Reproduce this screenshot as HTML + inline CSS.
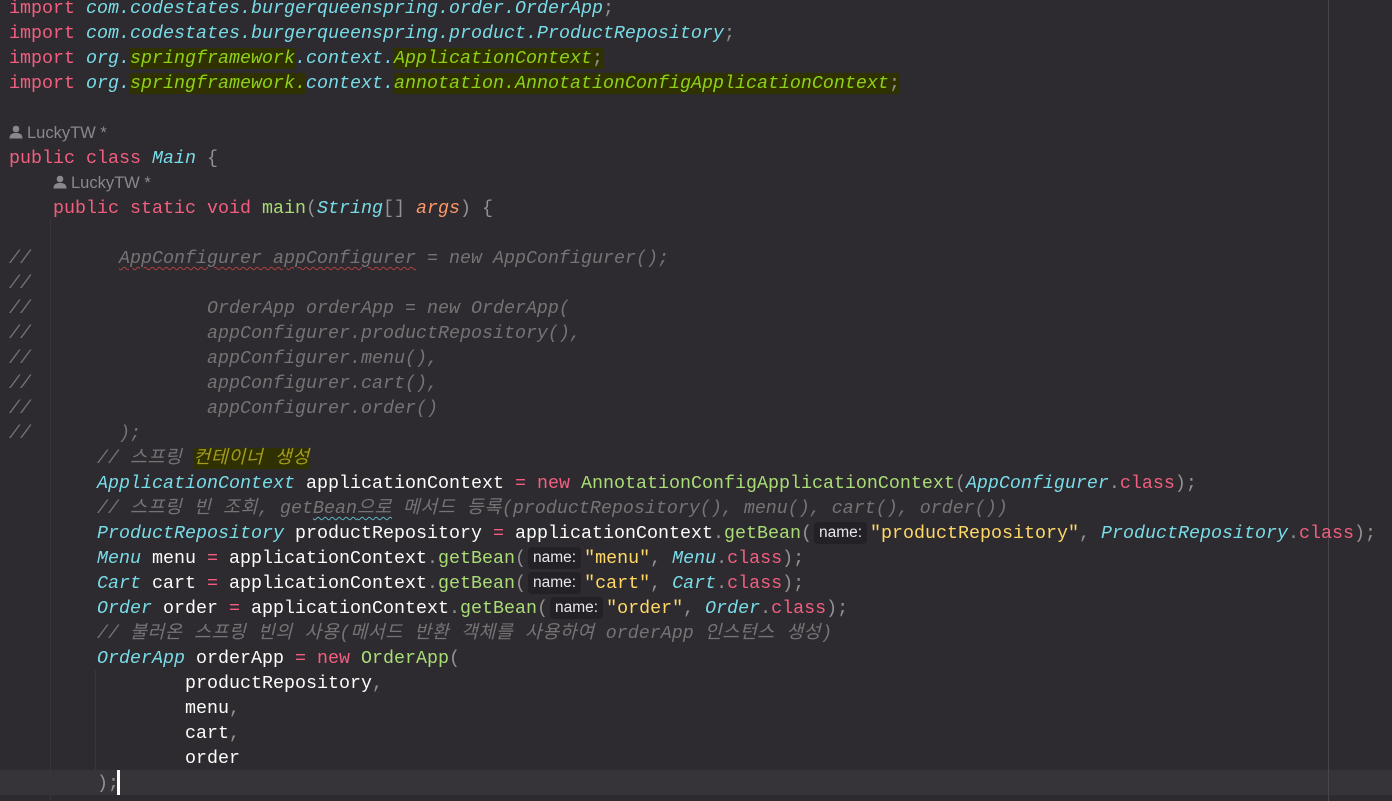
<!DOCTYPE html>
<html><head><meta charset="utf-8"><style>
html,body{margin:0;padding:0;}
body{width:1392px;height:801px;background:#2d2b2f;overflow:hidden;position:relative;
font-family:"Liberation Mono","Noto Sans CJK KR",monospace;font-size:18.33px;color:#fcfcfa;}
.l{position:absolute;left:9px;height:25px;line-height:25px;white-space:pre;}
.k{color:#f25e7f}
.p{color:#78dce8;font-style:italic}
.t{color:#78dce8;font-style:italic}
.g{color:#8ed11a;font-style:italic}
.hl{background:#2f3200}
.f{color:#a9dc76}
.s{color:#ffd866}
.c{color:#757376;font-style:italic}
.o{color:#fc9867;font-style:italic}
.d{color:#939293}
.e{color:#f25e7f}
.kr{letter-spacing:0.6px}
.a{font-family:"Liberation Sans","Noto Sans CJK KR",sans-serif;font-size:16.5px;color:#8a888c;}
.a svg{vertical-align:-1px;margin-right:4px}
.h{display:inline-block;font-family:"Liberation Sans",sans-serif;font-size:15.5px;color:#e8e6ea;background:#232125;border-radius:4px;height:22px;line-height:22px;padding:0 5px;margin:0 3px 0 2px;vertical-align:1px;}
.w{text-decoration:underline wavy #b04040;text-decoration-thickness:1px;text-underline-offset:3px}
.wb{text-decoration:underline wavy #5fb6c8;text-decoration-thickness:1px;text-underline-offset:3px}
.cur{position:absolute;left:0;top:770px;width:1392px;height:25px;background:#363438;}
.vl{position:absolute;top:0;left:1328px;width:1px;height:801px;background:#48464a;}
.ig{position:absolute;width:1px;background:#38363a;}
</style></head><body>
<div class="cur"></div>
<div class="vl"></div>
<div class="ig" style="left:50px;top:220px;height:581px"></div>
<div class="ig" style="left:95px;top:670px;height:100px"></div>

<div class="l" style="top:-4px"><span class="k">import</span> <span class="p">com.codestates.burgerqueenspring.order.OrderApp</span><span class="d">;</span></div>
<div class="l" style="top:21px"><span class="k">import</span> <span class="p">com.codestates.burgerqueenspring.product.ProductRepository</span><span class="d">;</span></div>
<div class="l" style="top:46px"><span class="k">import</span> <span class="p">org.</span><span class="g hl">springframework</span><span class="p">.context.</span><span class="g hl">ApplicationContext</span><span class="d hl">;</span></div>
<div class="l" style="top:71px"><span class="k">import</span> <span class="p">org.</span><span class="g hl">springframework.</span><span class="p">context.</span><span class="g hl">annotation.AnnotationConfigApplicationContext</span><span class="d hl">;</span></div>

<div class="l a" style="top:121px"><svg width="14" height="14" viewBox="0 0 14 14"><circle cx="7" cy="4" r="3.3" fill="#8a888c"/><path d="M0.5 13.5 C0.5 9 3.5 8 7 8 C10.5 8 13.5 9 13.5 13.5 Z" fill="#8a888c"/></svg>LuckyTW *</div>
<div class="l" style="top:146px"><span class="k">public class</span> <span class="t">Main</span> <span class="d">{</span></div>
<div class="l a" style="top:171px;left:53px"><svg width="14" height="14" viewBox="0 0 14 14"><circle cx="7" cy="4" r="3.3" fill="#8a888c"/><path d="M0.5 13.5 C0.5 9 3.5 8 7 8 C10.5 8 13.5 9 13.5 13.5 Z" fill="#8a888c"/></svg>LuckyTW *</div>
<div class="l" style="top:196px">    <span class="k">public static void</span> <span class="f">main</span><span class="d">(</span><span class="t">String</span><span class="d">[]</span> <span class="o">args</span><span class="d">) {</span></div>

<div class="l c" style="top:246px">//        <span class="w">AppConfigurer appConfigurer</span> = new AppConfigurer();</div>
<div class="l c" style="top:271px">//</div>
<div class="l c" style="top:296px">//                OrderApp orderApp = new OrderApp(</div>
<div class="l c" style="top:321px">//                appConfigurer.productRepository(),</div>
<div class="l c" style="top:346px">//                appConfigurer.menu(),</div>
<div class="l c" style="top:371px">//                appConfigurer.cart(),</div>
<div class="l c" style="top:396px">//                appConfigurer.order()</div>
<div class="l c" style="top:421px">//        );</div>
<div class="l c" style="top:446px">        // <span class="kr">스프링</span> <span class="hl kr" style="color:#a59a20">컨테이너 생성</span></div>
<div class="l" style="top:471px">        <span class="t">ApplicationContext</span> applicationContext <span class="e">=</span> <span class="k">new</span> <span class="f">AnnotationConfigApplicationContext</span><span class="d">(</span><span class="t">AppConfigurer</span><span class="d">.</span><span class="k">class</span><span class="d">);</span></div>
<div class="l c" style="top:496px">        // <span class="kr">스프링 빈 조회</span>, get<span class="wb">Bean<span class="kr">으로</span></span> <span class="kr">메서드 등록</span>(productRepository(), menu(), cart(), order())</div>
<div class="l" style="top:521px">        <span class="t">ProductRepository</span> productRepository <span class="e">=</span> applicationContext<span class="d">.</span><span class="f">getBean</span><span class="d">(</span><span class="h">name:</span><span class="s">"productRepository"</span><span class="d">,</span> <span class="t">ProductRepository</span><span class="d">.</span><span class="k">class</span><span class="d">);</span></div>
<div class="l" style="top:546px">        <span class="t">Menu</span> menu <span class="e">=</span> applicationContext<span class="d">.</span><span class="f">getBean</span><span class="d">(</span><span class="h">name:</span><span class="s">"menu"</span><span class="d">,</span> <span class="t">Menu</span><span class="d">.</span><span class="k">class</span><span class="d">);</span></div>
<div class="l" style="top:571px">        <span class="t">Cart</span> cart <span class="e">=</span> applicationContext<span class="d">.</span><span class="f">getBean</span><span class="d">(</span><span class="h">name:</span><span class="s">"cart"</span><span class="d">,</span> <span class="t">Cart</span><span class="d">.</span><span class="k">class</span><span class="d">);</span></div>
<div class="l" style="top:596px">        <span class="t">Order</span> order <span class="e">=</span> applicationContext<span class="d">.</span><span class="f">getBean</span><span class="d">(</span><span class="h">name:</span><span class="s">"order"</span><span class="d">,</span> <span class="t">Order</span><span class="d">.</span><span class="k">class</span><span class="d">);</span></div>
<div class="l c" style="top:621px">        // <span class="kr">불러온 스프링 빈의 사용</span>(<span class="kr">메서드 반환 객체를 사용하여</span> orderApp <span class="kr">인스턴스 생성</span>)</div>
<div class="l" style="top:646px">        <span class="t">OrderApp</span> orderApp <span class="e">=</span> <span class="k">new</span> <span class="f">OrderApp</span><span class="d">(</span></div>
<div class="l" style="top:671px">                productRepository<span class="d">,</span></div>
<div class="l" style="top:696px">                menu<span class="d">,</span></div>
<div class="l" style="top:721px">                cart<span class="d">,</span></div>
<div class="l" style="top:746px">                order</div>
<div class="l" style="top:771px">        <span class="d">);</span></div>
<div style="position:absolute;left:117px;top:770px;width:3px;height:25px;background:#fcfcfa"></div>
</body></html>
